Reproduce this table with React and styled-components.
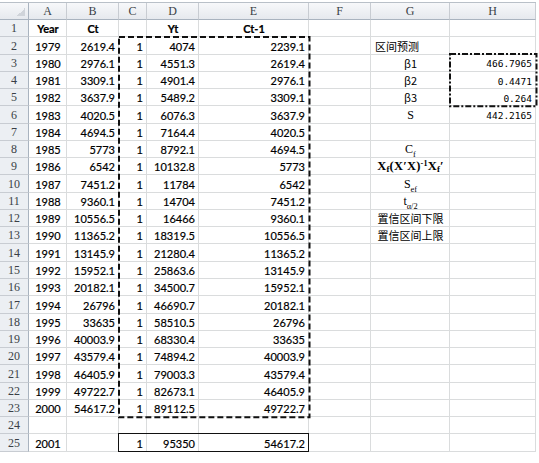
import React from 'react';
import styled, { createGlobalStyle } from 'styled-components';

const COLS = [29, 38, 52, 28, 52, 110, 62, 79, 86];
const HEADER_H = 17;
const ROW_H = 17.27;
const LETTERS = ['', 'A', 'B', 'C', 'D', 'E', 'F', 'G', 'H'];
const TEMPLATE_COLS = COLS.map((c) => c + 'px').join(' ');
const TEMPLATE_ROWS = `${HEADER_H}px repeat(25, ${ROW_H}px)`;

const Global = createGlobalStyle`
  html, body { margin: 0; padding: 0; background: #fff; }
  body { width: 539px; height: 463px; overflow: hidden; }
`;

const Wrap = styled.div`
  position: relative;
  margin-top: 2px;
  width: max-content;
  border-top: 1px solid #b9c0c8;
`;

const Sheet = styled.div`
  display: grid;
  grid-template-columns: ${TEMPLATE_COLS};
  grid-template-rows: ${TEMPLATE_ROWS};
  color: #000;
`;

const Layer = styled.div`
  position: absolute;
  inset: 0;
  display: grid;
  grid-template-columns: ${TEMPLATE_COLS};
  grid-template-rows: ${TEMPLATE_ROWS};
  pointer-events: none;
`;

const ColHead = styled.div`
  box-sizing: border-box;
  background: linear-gradient(#f7f8fa, #e6e9ee);
  border-right: 1px solid #c8ccd2;
  border-bottom: 1px solid #a9b3bf;
  display: flex;
  align-items: center;
  justify-content: center;
  font-family: 'Liberation Serif', serif;
  font-size: 12px;
  color: #3a3f46;
`;

const CornerHead = styled(ColHead)`
  border-right-color: #a9b3bf;
  background:
    linear-gradient(135deg, transparent 50%, #d0d4da 50%) right 3px bottom 3px / 8px 8px no-repeat,
    linear-gradient(#f7f8fa, #e6e9ee);
`;

const RowHead = styled.div`
  box-sizing: border-box;
  background: #eceff3;
  border-right: 1px solid #a9b3bf;
  border-bottom: 1px solid #c8ccd2;
  display: flex;
  align-items: flex-end;
  justify-content: center;
  padding-bottom: 2px;
  font-family: 'Liberation Serif', serif;
  font-size: 12px;
  line-height: 1;
  color: #3a3f46;
`;

const FONTS = {
  sans: "Lato, 'Liberation Sans', sans-serif",
  cjk: "'Noto Sans CJK SC', sans-serif",
  mono: "'DejaVu Sans Mono', 'Liberation Mono', monospace",
  serif: "'Liberation Serif', 'Times New Roman', serif",
};

const Cell = styled.div`
  box-sizing: border-box;
  border-right: 1px solid #dadcdd;
  border-bottom: 1px solid #dadcdd;
  display: flex;
  align-items: flex-end;
  justify-content: ${(p) =>
    p.$align === 'right' ? 'flex-end' : p.$align === 'center' ? 'center' : 'flex-start'};
  padding: 0 3px 2px 4px;
  font-family: ${(p) => FONTS[p.$font || 'sans']};
  font-size: ${(p) => p.$size || 11}px;
  font-weight: ${(p) => (p.$bold ? 700 : 400)};
  -webkit-text-stroke: ${(p) => (p.$font ? '0' : '0.2px')};
  line-height: 1;
  white-space: nowrap;
  overflow: visible;
`;

const Sub = styled.sub`
  font-size: 0.7em;
  vertical-align: -0.25em;
  line-height: 0;
`;

const Sup = styled.sup`
  font-size: 0.65em;
  vertical-align: 0.5em;
  line-height: 0;
`;

const Formula = styled.span`
  font-family: 'Liberation Serif', 'Times New Roman', serif;
  font-weight: 700;
  font-size: 12.5px;
  letter-spacing: 0.2px;
`;

const Frame = styled.div`
  grid-column: ${(p) => p.$cols};
  grid-row: ${(p) => p.$rows};
  margin: -1.5px -1px -1px -1.5px;
  min-width: 0;
  min-height: 0;
  position: relative;
`;

const FrameSvg = styled.svg`
  display: block;
  width: 100%;
  height: 100%;
  overflow: visible;
`;

const SolidFrame = styled.div`
  grid-column: ${(p) => p.$cols};
  grid-row: ${(p) => p.$rows};
  margin: -1px 0 0 -1px;
  border: 1px solid #111;
`;

const data = [
  [1979, 2619.4, 4074, 2239.1],
  [1980, 2976.1, 4551.3, 2619.4],
  [1981, 3309.1, 4901.4, 2976.1],
  [1982, 3637.9, 5489.2, 3309.1],
  [1983, 4020.5, 6076.3, 3637.9],
  [1984, 4694.5, 7164.4, 4020.5],
  [1985, 5773, 8792.1, 4694.5],
  [1986, 6542, 10132.8, 5773],
  [1987, 7451.2, 11784, 6542],
  [1988, 9360.1, 14704, 7451.2],
  [1989, 10556.5, 16466, 9360.1],
  [1990, 11365.2, 18319.5, 10556.5],
  [1991, 13145.9, 21280.4, 11365.2],
  [1992, 15952.1, 25863.6, 13145.9],
  [1993, 20182.1, 34500.7, 15952.1],
  [1994, 26796, 46690.7, 20182.1],
  [1995, 33635, 58510.5, 26796],
  [1996, 40003.9, 68330.4, 33635],
  [1997, 43579.4, 74894.2, 40003.9],
  [1998, 46405.9, 79003.3, 43579.4],
  [1999, 49722.7, 82673.1, 46405.9],
  [2000, 54617.2, 89112.5, 49722.7],
];

const mono = (v) => ({ v, align: 'right', font: 'mono', size: 9.5 });

const gExtra = {
  2: { g: { v: '区间预测', align: 'left', font: 'cjk' } },
  3: { g: { v: 'β1', align: 'center', font: 'cjk' }, h: mono('466.7965') },
  4: { g: { v: 'β2', align: 'center', font: 'cjk' }, h: mono('0.4471') },
  5: { g: { v: 'β3', align: 'center', font: 'cjk' }, h: mono('0.264') },
  6: { g: { v: 'S', align: 'center', font: 'serif', size: 12 }, h: mono('442.2165') },
  8: { g: { v: <>C<Sub>f</Sub></>, align: 'center', font: 'serif', size: 12 } },
  9: {
    g: {
      v: (
        <Formula>
          X<Sub>f</Sub>(X′X)<Sup>-1</Sup>X<Sub>f</Sub>′
        </Formula>
      ),
      align: 'center',
      font: 'serif',
    },
  },
  10: { g: { v: <>S<Sub>ef</Sub></>, align: 'center', font: 'serif', size: 12 } },
  11: { g: { v: <>t<Sub>α/2</Sub></>, align: 'center', font: 'serif', size: 12 } },
  12: { g: { v: '置信区间下限', align: 'center', font: 'cjk' } },
  13: { g: { v: '置信区间上限', align: 'center', font: 'cjk' } },
};

const blank = () => ({ v: '' });

function buildRows() {
  const rows = [];
  rows.push([
    { v: 'Year', align: 'center', bold: true },
    { v: 'Ct', align: 'center', bold: true },
    blank(),
    { v: 'Yt', align: 'center', bold: true },
    { v: 'Ct-1', align: 'center', bold: true },
    blank(),
    blank(),
    blank(),
  ]);
  data.forEach(([y, ct, yt, ct1]) => {
    rows.push([
      { v: y, align: 'center' },
      { v: ct, align: 'right' },
      { v: 1, align: 'right' },
      { v: yt, align: 'right' },
      { v: ct1, align: 'right' },
      blank(),
      blank(),
      blank(),
    ]);
  });
  rows.push([blank(), blank(), blank(), blank(), blank(), blank(), blank(), blank()]);
  rows.push([
    { v: 2001, align: 'center' },
    blank(),
    { v: 1, align: 'right' },
    { v: 95350, align: 'right' },
    { v: 54617.2, align: 'right' },
    blank(),
    blank(),
    blank(),
  ]);
  rows.forEach((r, i) => {
    const extra = gExtra[i + 1];
    if (extra) {
      if (extra.g) r[6] = extra.g;
      if (extra.h) r[7] = extra.h;
    }
  });
  return rows;
}

function DashedFrame({ cols, rows, dash }) {
  return (
    <Frame $cols={cols} $rows={rows}>
      <FrameSvg>
        <rect
          x="1"
          y="1"
          style={{ width: 'calc(100% - 2px)', height: 'calc(100% - 2px)' }}
          fill="none"
          stroke="#111"
          strokeWidth="2"
          strokeDasharray={dash}
        />
      </FrameSvg>
    </Frame>
  );
}

export default function App() {
  const rows = buildRows();
  return (
    <>
      <Global />
      <Wrap>
        <Sheet>
          {LETTERS.map((l, i) =>
            i === 0 ? <CornerHead key="corner" /> : <ColHead key={'h' + i}>{l}</ColHead>
          )}
          {rows.map((r, ri) => (
            <React.Fragment key={ri}>
              <RowHead>{ri + 1}</RowHead>
              {r.map((c, ci) => (
                <Cell key={ci} $align={c.align} $bold={c.bold} $font={c.font} $size={c.size}>
                  {c.v}
                </Cell>
              ))}
            </React.Fragment>
          ))}
        </Sheet>
        <Layer>
          <DashedFrame cols="4 / 7" rows="3 / 25" dash="6 3" />
          <DashedFrame cols="9 / 10" rows="4 / 7" dash="6 2 2 2" />
          <SolidFrame $cols="4 / 7" $rows="26 / 27" />
        </Layer>
      </Wrap>
    </>
  );
}
